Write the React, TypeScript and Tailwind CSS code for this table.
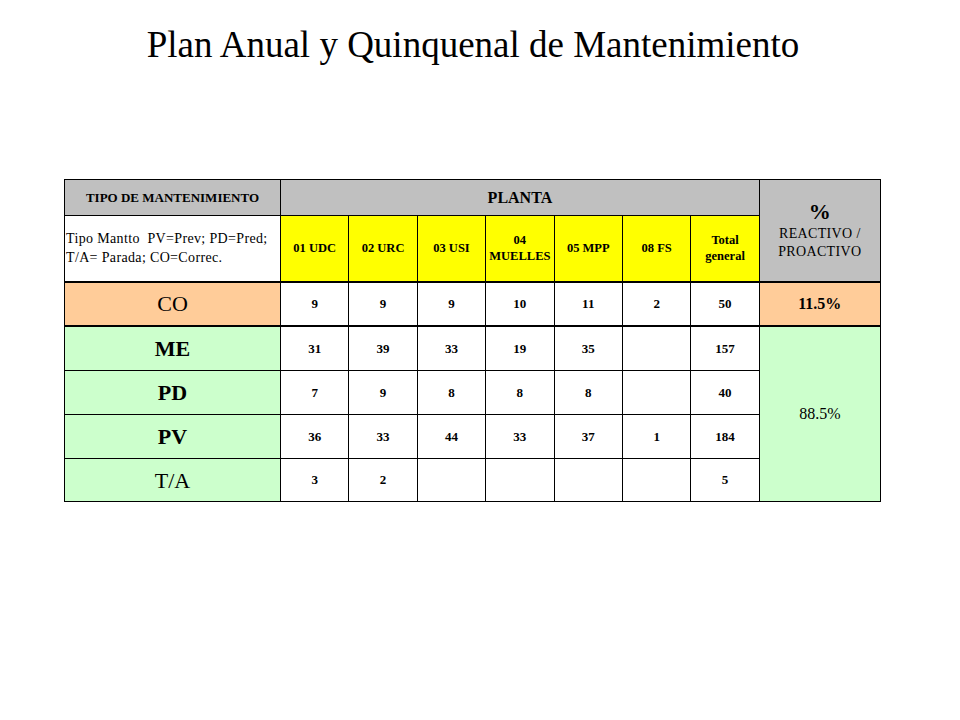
import React from 'react';

const plants = [
    { label: ['01 UDC'] },
    { label: ['02 URC'] },
    { label: ['03 USI'] },
    { label: ['04', 'MUELLES'] },
    { label: ['05 MPP'] },
    { label: ['08 FS'] },
    { label: ['Total', 'general'] },
];

const rows = [
    { tipo: 'CO', bold: false, values: ['9', '9', '9', '10', '11', '2', '50'], bg: 'bg-[#ffcc99]' },
    { tipo: 'ME', bold: true, values: ['31', '39', '33', '19', '35', '', '157'], bg: 'bg-[#ccffcc]' },
    { tipo: 'PD', bold: true, values: ['7', '9', '8', '8', '8', '', '40'], bg: 'bg-[#ccffcc]' },
    { tipo: 'PV', bold: true, values: ['36', '33', '44', '33', '37', '1', '184'], bg: 'bg-[#ccffcc]' },
    { tipo: 'T/A', bold: false, values: ['3', '2', '', '', '', '', '5'], bg: 'bg-[#ccffcc]' },
];

const heights = ['h-[44px]', 'h-[45px]', 'h-[44px]', 'h-[44px]', 'h-[43px]'];

export default function App() {
    return (
        <div className="w-[960px] h-[720px] bg-white text-black [font-family:'Liberation_Serif',serif]">
            <h1 className="pt-[23px] pr-[14px] text-center text-[37px] leading-[44px]">
                Plan Anual y Quinquenal de Mantenimiento
            </h1>

            <table className="mt-[112px] ml-[64px] w-[816px] table-fixed border-collapse border border-black [font-family:'Liberation_Serif',serif]">
                <colgroup>
                    <col className="w-[216px]" />
                    {plants.map((_, i) => (
                        <col key={i} className="w-[68.4px]" />
                    ))}
                    <col className="w-[121px]" />
                </colgroup>
                <tbody>
                    <tr className="h-[36px]">
                        <td className="border border-black bg-[#c0c0c0] text-center text-[13px] font-bold">
                            TIPO DE MANTENIMIENTO
                        </td>
                        <td colSpan={7} className="border border-black bg-[#c0c0c0] text-center text-[16px] font-bold">
                            PLANTA
                        </td>
                        <td rowSpan={2} className="border border-black bg-[#c0c0c0] text-center align-middle">
                            <div className="text-[22px] font-bold leading-[26px]">%</div>
                            <div className="text-[14px] leading-[18px] tracking-wide">
                                REACTIVO /<br />PROACTIVO
                            </div>
                        </td>
                    </tr>
                    <tr className="h-[66px] border-b-2 border-black">
                        <td className="border border-black pl-[1px] text-left text-[14px] leading-[19px] tracking-wide whitespace-pre">
                            {'Tipo Mantto  PV=Prev; PD=Pred;\nT/A= Parada; CO=Correc.'}
                        </td>
                        {plants.map((p, i) => (
                            <td key={i} className="border border-black bg-[#ffff00] text-center text-[12.5px] font-bold leading-[16px]">
                                {p.label.map((l, j) => (
                                    <div key={j}>{l}</div>
                                ))}
                            </td>
                        ))}
                    </tr>
                    {rows.map((r, ri) => (
                        <tr key={r.tipo} className={`${heights[ri]} ${ri === 0 ? 'border-b-2 border-black' : ''}`}>
                            <td className={`border border-black ${r.bg} text-center text-[22px] ${r.bold ? 'font-bold' : ''}`}>
                                {r.tipo}
                            </td>
                            {r.values.map((v, vi) => (
                                <td key={vi} className="border border-black bg-white text-center text-[13px] font-bold">
                                    {v}
                                </td>
                            ))}
                            {ri === 0 && (
                                <td className="border border-black bg-[#ffcc99] text-center text-[16px] font-bold">
                                    11.5%
                                </td>
                            )}
                            {ri === 1 && (
                                <td rowSpan={4} className="border border-black bg-[#ccffcc] text-center text-[16px]">
                                    88.5%
                                </td>
                            )}
                        </tr>
                    ))}
                </tbody>
            </table>
        </div>
    );
}
